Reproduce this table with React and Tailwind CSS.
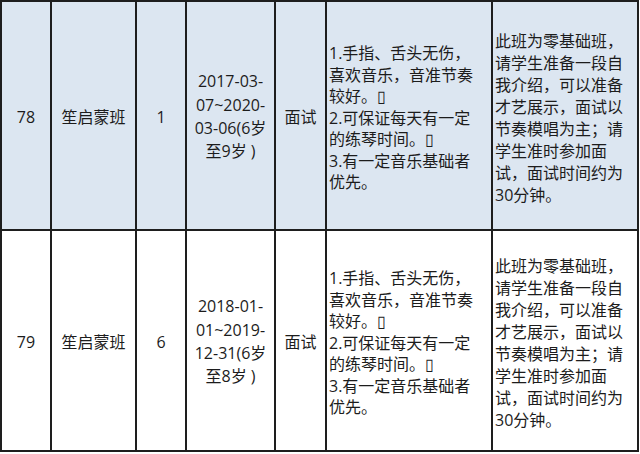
import React from "react";

const rows = [
  {
    no: "78",
    name: "笙启蒙班",
    count: "1",
    date: ["2017-03-", "07~2020-", "03-06(6岁", "至9岁 )"],
    bg: "bg-[#dce6f1]",
    h: "h-[229px]",
  },
  {
    no: "79",
    name: "笙启蒙班",
    count: "6",
    date: ["2018-01-", "01~2019-", "12-31(6岁", "至8岁 )"],
    bg: "bg-white",
    h: "h-[221px]",
  },
];

const req = [
  "1.手指、舌头无伤，",
  "喜欢音乐，音准节奏",
  "较好。▯",
  "2.可保证每天有一定",
  "的练琴时间。▯",
  "3.有一定音乐基础者",
  "优先。",
];

const note = [
  "此班为零基础班，",
  "请学生准备一段自",
  "我介绍，可以准备",
  "才艺展示，面试以",
  "节奏模唱为主；请",
  "学生准时参加面",
  "试，面试时间约为",
  "30分钟。",
];

const cell = "border-r-2 border-b-2 border-[#1e1e1e] flex items-center";

export default function App() {
  return (
    <div className="w-[640px] h-[454px] bg-white">
      <div
        className="grid w-[639px] border-t-2 border-l-2 border-[#1e1e1e] text-[16px] text-[#1c1c1c]"
        style={{
          fontFamily: '"Open Sans", "Noto Sans CJK SC", sans-serif',
        }}
      >
        <div className="grid grid-cols-[50px_85px_50px_89px_51px_166px_146px]">
          {rows.map((r) => (
            <React.Fragment key={r.no}>
              <div className={`${cell} ${r.bg} ${r.h} justify-center pt-[3px]`}>{r.no}</div>
              <div className={`${cell} ${r.bg} ${r.h} justify-center pt-[3px]`}>{r.name}</div>
              <div className={`${cell} ${r.bg} ${r.h} justify-center pt-[3px]`}>{r.count}</div>
              <div className={`${cell} ${r.bg} ${r.h} justify-center pt-[3px]`}>
                <div className="flex flex-col items-center leading-[23.3px]">
                  {r.date.map((d) => (
                    <span key={d} className="whitespace-pre">{d}</span>
                  ))}
                </div>
              </div>
              <div className={`${cell} ${r.bg} ${r.h} justify-center pt-[3px]`}>面试</div>
              <div className={`${cell} ${r.bg} ${r.h} pl-[2px] pt-[6px]`}>
                <div className="flex flex-col leading-[21.5px]">
                  {req.map((d) => (
                    <span key={d} className="whitespace-nowrap">{d}</span>
                  ))}
                </div>
              </div>
              <div className={`${cell} ${r.bg} ${r.h} pl-[2px] pt-[5px]`}>
                <div className="flex flex-col leading-[22px]">
                  {note.map((d) => (
                    <span key={d} className="whitespace-nowrap">{d}</span>
                  ))}
                </div>
              </div>
            </React.Fragment>
          ))}
        </div>
      </div>
    </div>
  );
}
